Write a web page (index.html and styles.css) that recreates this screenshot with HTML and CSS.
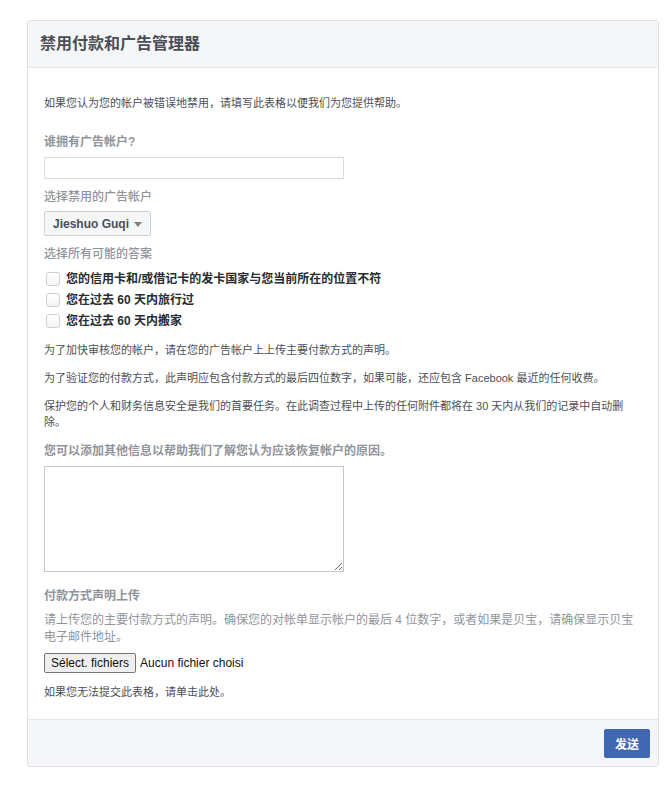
FILE: index.html
```html
<!DOCTYPE html>
<html lang="zh-CN">
<head>
<meta charset="utf-8">
<title>禁用付款和广告管理器</title>
<link rel="stylesheet" href="styles.css">
</head>
<body>
<div class="page">
  <div class="card">
    <div class="card-head">
      <h1 class="title">禁用付款和广告管理器</h1>
    </div>
    <div class="card-body">
      <p class="intro">如果您认为您的帐户被错误地禁用，请填写此表格以便我们为您提供帮助。</p>

      <div class="label label-bold lbl1">谁拥有广告帐户?</div>
      <input class="text-input" type="text">

      <div class="label label-mid lbl2">选择禁用的广告帐户</div>
      <div class="select-btn"><span>Jieshuo Guqi</span><span class="caret"></span></div>

      <div class="label label-mid lbl3">选择所有可能的答案</div>
      <div class="checks">
        <div class="check-row"><span class="box"></span><span class="check-text">您的信用卡和/或借记卡的发卡国家与您当前所在的位置不符</span></div>
        <div class="check-row"><span class="box"></span><span class="check-text">您在过去 60 天内旅行过</span></div>
        <div class="check-row"><span class="box"></span><span class="check-text">您在过去 60 天内搬家</span></div>
      </div>

      <p class="para p1">为了加快审核您的帐户，请在您的广告帐户上上传主要付款方式的声明。</p>
      <p class="para p2">为了验证您的付款方式，此声明应包含付款方式的最后四位数字，如果可能，还应包含 Facebook 最近的任何收费。</p>
      <p class="para p3">保护您的个人和财务信息安全是我们的首要任务。在此调查过程中上传的任何附件都将在 30 天内从我们的记录中自动删除。</p>

      <div class="label label-bold lbl4">您可以添加其他信息以帮助我们了解您认为应该恢复帐户的原因。</div>
      <textarea class="textarea"></textarea>

      <div class="label label-bold lbl5">付款方式声明上传</div>
      <p class="desc">请上传您的主要付款方式的声明。确保您的对帐单显示帐户的最后 4 位数字，或者如果是贝宝，请确保显示贝宝电子邮件地址。</p>
      <div class="file-row"><span class="file-btn">Sélect. fichiers</span><span class="file-name">Aucun fichier choisi</span></div>

      <p class="small">如果您无法提交此表格，请单击此处。</p>
    </div>
    <div class="card-foot">
      <button class="send" type="button">发送</button>
    </div>
  </div>
</div>
</body>
</html>
```

FILE: styles.css
```css
* { box-sizing: border-box; }
html, body { margin: 0; padding: 0; background: #fff; }
body {
  font-family: "Liberation Sans", "Noto Sans CJK SC", sans-serif;
  color: #4b4f56;
}
.page { padding: 20px 10px 0 27px; }
.card {
  width: 632px;
  border: 1px solid #dddfe2;
  border-radius: 3px;
  background: #fff;
  overflow: hidden;
}
.card-head {
  background: #f5f6f7;
  border-bottom: 1px solid #e5e6e9;
  height: 47px;
  padding: 0 12px;
  display: flex;
  align-items: center;
}
.title {
  margin: 0;
  font-size: 16px;
  font-weight: bold;
  color: #4b4f56;
  line-height: 20px;
}
.card-body { padding: 27px 16px 19px 16px; }
p { margin: 0; }
.intro { font-size: 11px; line-height: 16px; color: #4b4f56; }
.label { font-size: 12px; line-height: 16px; color: #90949c; }
.label-bold { font-weight: bold; }
.label-mid { font-weight: 500; }
.lbl1 { margin-top: 23px; }
.lbl2 { margin-top: 10px; }
.lbl3 { margin-top: 10px; }
.lbl4 { margin-top: 13px; }
.lbl5 { margin-top: 16px; }
.text-input {
  display: block;
  margin-top: 7px;
  width: 300px;
  height: 22px;
  border: 1px solid #d7dade;
  border-radius: 0;
  padding: 0 4px;
  font-size: 12px;
  outline: none;
}
.select-btn {
  margin-top: 6px;
  width: 107px;
  height: 25px;
  display: flex;
  align-items: center;
  padding: 0 8px 0 8px;
  gap: 5px;
  background: #f5f6f7;
  border: 1px solid #ccd0d5;
  border-radius: 2px;
  font-size: 12px;
  font-weight: bold;
  color: #4b4f56;
}
.caret {
  width: 0; height: 0;
  border-left: 4px solid transparent;
  border-right: 4px solid transparent;
  border-top: 5px solid #7f7f7f;
  margin-top: 1px;
}
.checks { margin-top: 6px; }
.check-row {
  display: flex;
  align-items: center;
  height: 21px;
  padding-left: 2px;
}
.box {
  width: 14px;
  height: 14px;
  border: 1px solid #ced0d4;
  border-radius: 3px;
  background: linear-gradient(#fff, #f3f4f6);
  margin-right: 6px;
  flex: none;
}
.check-text { font-size: 12px; font-weight: bold; color: #292d33; line-height: 16px; }
.para { font-size: 11px; line-height: 16px; color: #4b4f56; }
.p1 { margin-top: 11px; }
.p2 { margin-top: 12px; }
.p3 { margin-top: 12px; }
.textarea {
  display: block;
  margin-top: 7px;
  width: 300px;
  height: 106px;
  border: 1px solid #c4c7cc;
  border-radius: 0;
  font-size: 12px;
  resize: both;
  outline: none;
}
.desc { margin-top: 8px; font-size: 12px; line-height: 17px; color: #90949c; }
.file-row {
  margin-top: 7px;
  display: flex;
  align-items: center;
  gap: 4px;
  font-size: 12px;
  color: #111;
}
.file-btn {
  display: inline-block;
  height: 20px;
  line-height: 18px;
  padding: 0 6px;
  background: #efefef;
  border: 1px solid #767676;
  border-radius: 2px;
}
.small { margin-top: 11px; font-size: 11px; line-height: 16px; color: #4b4f56; }
.card-foot {
  background: #f5f6f7;
  border-top: 1px solid #e5e6e9;
  height: 47px;
  padding: 0 8px;
  display: flex;
  align-items: center;
  justify-content: flex-end;
}
.send {
  height: 29px;
  width: 46px;
  padding: 0;
  border: 1px solid #4267b2;
  border-radius: 2px;
  background: #4267b2;
  color: #fff;
  font-family: "Liberation Sans", "Noto Sans CJK SC", sans-serif;
  font-size: 12px;
  font-weight: bold;
}
```
